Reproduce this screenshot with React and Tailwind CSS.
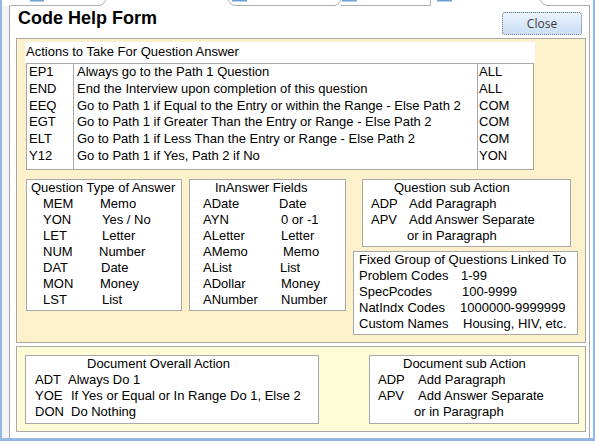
import React from 'react';

const actions = [
  { code: 'EP1', text: 'Always go to the Path 1 Question', scope: 'ALL' },
  { code: 'END', text: 'End the Interview upon completion of this question', scope: 'ALL' },
  { code: 'EEQ', text: 'Go to Path 1 if Equal to the Entry or within the Range - Else Path 2', scope: 'COM' },
  { code: 'EGT', text: 'Go to Path 1 if Greater Than the Entry or Range - Else Path 2', scope: 'COM' },
  { code: 'ELT', text: 'Go to Path 1 if Less Than the Entry or Range - Else Path 2', scope: 'COM' },
  { code: 'Y12', text: 'Go to Path 1 if Yes, Path 2 if No', scope: 'YON' },
];

const answerTypes = [
  { c: 'MEM', v: 'Memo', w: 'w-[57px]' },
  { c: 'YON', v: 'Yes / No', w: 'w-[59px]' },
  { c: 'LET', v: 'Letter', w: 'w-[59px]' },
  { c: 'NUM', v: 'Number', w: 'w-[56px]' },
  { c: 'DAT', v: 'Date', w: 'w-[58px]' },
  { c: 'MON', v: 'Money', w: 'w-[57px]' },
  { c: 'LST', v: 'List', w: 'w-[59px]' },
];

const inAnswer = [
  { c: 'ADate', v: 'Date', w: 'w-[76px]' },
  { c: 'AYN', v: '0 or -1', w: 'w-[78px]' },
  { c: 'ALetter', v: 'Letter', w: 'w-[78px]' },
  { c: 'AMemo', v: 'Memo', w: 'w-[80px]' },
  { c: 'AList', v: 'List', w: 'w-[77px]' },
  { c: 'ADollar', v: 'Money', w: 'w-[78px]' },
  { c: 'ANumber', v: 'Number', w: 'w-[78px]' },
];

const fixedGroups = [
  { c: 'Problem Codes', v: '1-99', w: 'w-[102px]' },
  { c: 'SpecPcodes', v: '100-9999', w: 'w-[103px]' },
  { c: 'NatIndx Codes', v: '1000000-9999999', w: 'w-[101px]' },
  { c: 'Custom Names', v: 'Housing, HIV, etc.', w: 'w-[104px]' },
];

const docActions = [
  { c: 'ADT', v: 'Always Do 1', w: 'w-[33px]' },
  { c: 'YOE', v: 'If Yes or Equal or In Range Do 1, Else 2', w: 'w-[36px]' },
  { c: 'DON', v: 'Do Nothing', w: 'w-[36px]' },
];

const Row = ({ item, pad }) => (
  <div className={`flex whitespace-nowrap ${pad}`}>
    <span className={`${item.w} shrink-0`}>{item.c}</span>
    <span>{item.v}</span>
  </div>
);

const SubAction = ({ title, titlePad, codeW, orPad }) => (
  <>
    <div className={titlePad}>{title}</div>
    <div className="flex pl-[8px]">
      <span className={`${codeW} shrink-0`}>ADP</span>
      <span>Add Paragraph</span>
    </div>
    <div className="flex pl-[8px]">
      <span className={`${codeW} shrink-0`}>APV</span>
      <span>Add Answer Separate</span>
    </div>
    <div className={orPad}>or in Paragraph</div>
  </>
);

const TabStrip = () => (
  <svg width="591" height="6" viewBox="0 0 591 6" className="block shrink-0">
    <rect x="28" y="0" width="14" height="1.5" fill="#6e9fd8" />
    <rect x="230" y="0" width="15" height="1.5" fill="#6e9fd8" />
    <rect x="340" y="0" width="15" height="1.5" fill="#6e9fd8" />
    <rect x="435" y="0" width="15" height="1.5" fill="#6e9fd8" />
    <path d="M7.5 6 V5.5 H98 Q101 5.5 104 0" fill="none" stroke="#b0b0b0" />
    <path d="M226 0 Q229 5.5 232 5.5 H333 Q336 5.5 339 0" fill="none" stroke="#b0b0b0" />
    <path d="M339 5.5 H428.5 V0" fill="none" stroke="#b0b0b0" />
    <path d="M538 0 Q541 5.5 545 5.5 H587.5 V6" fill="none" stroke="#b0b0b0" />
  </svg>
);

const App = () => {
  return (
    <div className="w-[595px] h-[441px] bg-white border-l-[2px] border-r-[2px] border-b-[3px] border-[#94b8e3] flex flex-col overflow-hidden text-black font-['Liberation_Sans',Arial,sans-serif] text-[13px] leading-[16px]">
      <TabStrip />
      <div className="flex flex-1 min-h-0">
        <div className="w-[8px] shrink-0 bg-[#f3f3f3] border-r border-[#a8a8a8]" />

        <div className="w-[579px] shrink-0 flex flex-col">
          {/* title + close */}
          <div className="h-[32px] flex justify-between items-start shrink-0">
            <h1 className="ml-[8px] mt-[2px] text-[18px] leading-[21px] font-bold">Code Help Form</h1>
            <button className="mt-[6px] mr-[7px] w-[80px] h-[23px] rounded-[3px] border border-dotted border-[#5d6f88] bg-gradient-to-b from-[#ebf3fd] to-[#cadef5] text-[#3a3a3a] text-[12px] leading-[20px] font-['Open_Sans',sans-serif]">
              Close
            </button>
          </div>

          {/* question actions panel */}
          <div className="ml-[6px] w-[570px] h-[305px] shrink-0 border border-[#a8a8a8] bg-[#fdf1cb] pl-[8px] pt-[3px]">
            <div className="w-[510px] h-[21px] bg-white pt-[2px] pl-[1px]">Actions to Take For Question Answer</div>
            <div className="ml-[1px] w-[508px] h-[107px] border border-[#a8a8a8] bg-white flex leading-[16.8px]">
              <div className="w-[47px] border-r border-[#a8a8a8] pl-[2px]">
                {actions.map(a => <div key={a.code}>{a.code}</div>)}
              </div>
              <div className="w-[404px] border-r border-[#a8a8a8] pl-[3px] whitespace-nowrap">
                {actions.map(a => <div key={a.code}>{a.text}</div>)}
              </div>
              <div className="flex-1 pl-[1px]">
                {actions.map(a => <div key={a.code}>{a.scope}</div>)}
              </div>
            </div>

            <div className="mt-[9px] ml-[1px] flex items-start">
              <div className="w-[156px] h-[132px] border border-[#a8a8a8] bg-white">
                <div className="pl-[4px] whitespace-nowrap">Question Type of Answer</div>
                {answerTypes.map(t => <Row key={t.c} item={t} pad="pl-[16px]" />)}
              </div>

              <div className="ml-[7px] w-[157px] h-[132px] border border-[#a8a8a8] bg-white">
                <div className="pl-[25px]">InAnswer Fields</div>
                {inAnswer.map(t => <Row key={t.c} item={t} pad="pl-[13px]" />)}
              </div>

              <div className="ml-[7px] flex flex-col">
                <div className="ml-[9px] w-[209px] h-[68px] border border-[#a8a8a8] bg-white whitespace-nowrap">
                  <SubAction title="Question sub Action" titlePad="pl-[31px]" codeW="w-[38px]" orPad="pl-[44px]" />
                </div>
                <div className="mt-[4px] w-[225px] h-[84px] border border-[#a8a8a8] bg-white pl-[5px]">
                  <div className="whitespace-nowrap">Fixed Group of Questions Linked To</div>
                  {fixedGroups.map(g => <Row key={g.c} item={g} pad="" />)}
                </div>
              </div>
            </div>
          </div>

          {/* document actions panel */}
          <div className="mt-[3px] ml-[6px] w-[570px] h-[86px] shrink-0 border border-[#a8a8a8] bg-[#fefcd6] pl-[8px] pt-[8px] flex items-start">
            <div className="w-[294px] h-[69px] border border-[#a8a8a8] bg-white">
              <div className="pl-[61px]">Document Overall Action</div>
              {docActions.map(d => <Row key={d.c} item={d} pad="pl-[9px]" />)}
            </div>
            <div className="ml-[50px] w-[210px] h-[69px] border border-[#a8a8a8] bg-white whitespace-nowrap">
              <SubAction title="Document sub Action" titlePad="pl-[33px]" codeW="w-[40px]" orPad="pl-[44px]" />
            </div>
          </div>
        </div>

        <div className="w-[4px] shrink-0 border-l border-[#a8a8a8]" />
      </div>
    </div>
  );
};

export default App;
